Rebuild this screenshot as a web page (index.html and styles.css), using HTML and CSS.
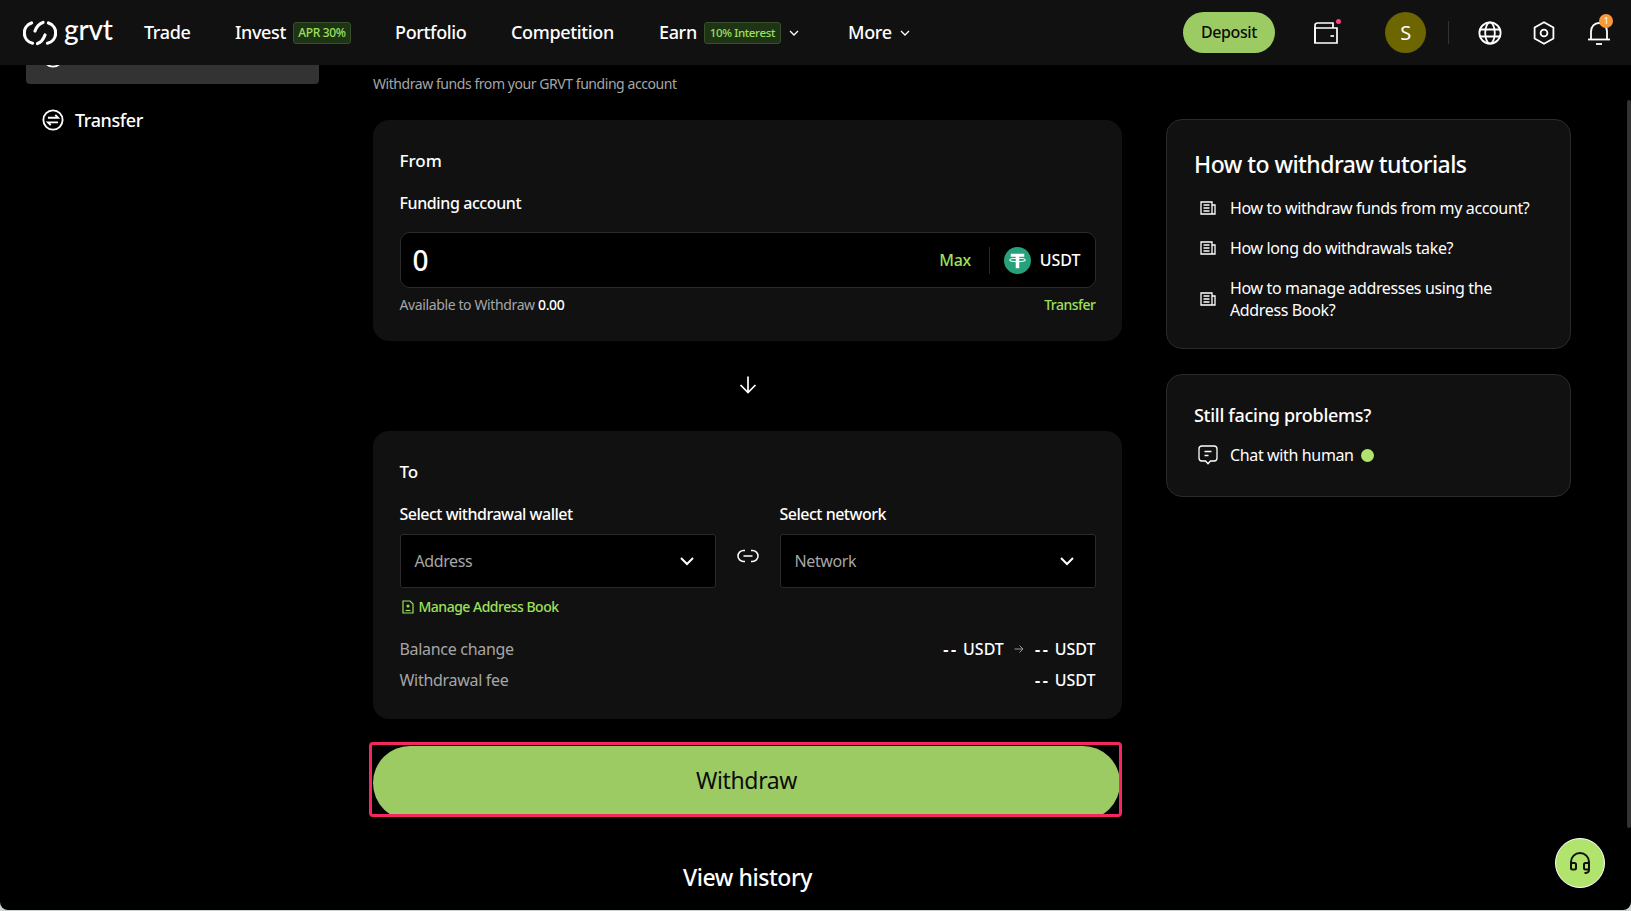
FILE: index.html
```html
<!DOCTYPE html>
<html lang="en">
<head>
<meta charset="utf-8">
<title>Withdraw</title>
<link rel="stylesheet" href="styles.css">
</head>
<body>
<div class="app">
  <header class="topbar">
    <a class="logo">
      <svg class="logo-mark" viewBox="0 0 34 26" fill="none" stroke="#fff" stroke-width="3.2" stroke-linecap="round">
        <path d="M8.5 3A10.5 10.5 0 0 0 9.5 23.2"/>
        <path d="M25.5 3A10.5 10.5 0 0 1 24.5 23.2"/>
        <path d="M20 2.5C16 3.5 13.5 7 12 11"/>
        <path d="M22 15C20.5 19 18 22.5 14.5 23.5"/>
      </svg>
      <span class="logo-text">grvt</span>
    </a>
    <nav class="nav">
      <a class="nav-item nav-trade">Trade</a>
      <a class="nav-item nav-invest">Invest<span class="tag tag-apr">APR 30%</span></a>
      <a class="nav-item nav-portfolio">Portfolio</a>
      <a class="nav-item nav-competition">Competition</a>
      <a class="nav-item nav-earn">Earn<span class="tag tag-interest">10% Interest</span>
        <svg class="chev" viewBox="0 0 10 6" fill="none" stroke="#fff" stroke-width="1.3"><path d="M1 1l4 4 4-4"/></svg></a>
      <a class="nav-item nav-more">More
        <svg class="chev" viewBox="0 0 10 6" fill="none" stroke="#fff" stroke-width="1.3"><path d="M1 1l4 4 4-4"/></svg></a>
    </nav>
    <div class="top-actions">
      <button class="deposit">Deposit</button>
      <span class="icon-wrap wallet">
        <svg viewBox="0 0 24 22" width="24" height="22" fill="none" stroke="#fff" stroke-width="1.7">
          <path d="M1 21V3.5C1 2 2 1 3.5 1H19V6"/><path d="M1 6H23V21H1Z"/><path d="M16.5 14H20"/>
        </svg>
        <i class="wallet-dot"></i>
      </span>
      <span class="avatar">S</span>
      <span class="sep"></span>
      <svg class="top-icon globe" viewBox="0 0 24 24" fill="none" stroke="#fff" stroke-width="1.8">
        <circle cx="12" cy="12" r="10.6"/><ellipse cx="12" cy="12" rx="4.8" ry="10.6"/><path d="M1.4 8.5H22.6M1.4 15.5H22.6"/>
      </svg>
      <svg class="top-icon hex" viewBox="0 0 24 24" fill="none" stroke="#fff" stroke-width="1.8">
        <path d="M12 1.2L21.4 6.5V17.5L12 22.8L2.6 17.5V6.5Z"/><circle cx="12" cy="12" r="3.4"/>
      </svg>
      <span class="icon-wrap bell">
        <svg viewBox="0 0 24 24" width="24" height="24" fill="none" stroke="#fff" stroke-width="1.8">
          <path d="M4 18V10.5C4 5.5 7.5 2 12 2S20 5.5 20 10.5V18"/><path d="M1 18.5H23"/><path d="M9 23H15"/>
        </svg>
        <i class="bell-badge">1</i>
      </span>
    </div>
  </header>

  <div class="content">
    <aside class="sidebar">
      <div class="side-active">
        <svg class="side-icon" viewBox="0 0 24 24" fill="none" stroke="#fff" stroke-width="2"><circle cx="12" cy="12" r="10.5"/></svg>
      </div>
      <div class="side-item">
        <svg class="side-icon" viewBox="0 0 24 24" fill="none" stroke="#fff" stroke-width="2"><circle cx="12" cy="12" r="10.5"/><path d="M6.5 9.5H17.5L14.5 6.5M17.5 14.5H6.5L9.5 17.5"/></svg>
        <span>Transfer</span>
      </div>
    </aside>

    <main class="main">
      <p class="subtitle">Withdraw funds from your GRVT funding account</p>

      <section class="card card-from">
        <h3 class="card-title">From</h3>
        <div class="field-label">Funding account</div>
        <div class="amount">
          <span class="amount-value">0</span>
          <span class="max">Max</span>
          <span class="amount-sep"></span>
          <svg class="usdt" viewBox="0 0 26 26">
            <circle cx="13" cy="13" r="13" fill="#26a17b"/>
            <path d="M6.5 6.5H19.5V9.5H14.7V20.5H11.3V9.5H6.5Z" fill="#fff"/>
            <ellipse cx="13" cy="12.5" rx="7.5" ry="1.6" fill="none" stroke="#fff" stroke-width="1"/>
          </svg>
          <span class="coin">USDT</span>
        </div>
        <div class="avail">
          <span class="avail-label">Available to Withdraw <b>0.00</b></span>
          <a class="green-link">Transfer</a>
        </div>
      </section>

      <div class="arrow-row">
        <svg viewBox="0 0 18 18" width="18" height="18" fill="none" stroke="#fff" stroke-width="1.7"><path d="M9 0.5V16.5M1.5 9L9 16.5L16.5 9"/></svg>
      </div>

      <section class="card card-to">
        <h3 class="card-title">To</h3>
        <div class="selects">
          <div class="select-col">
            <div class="field-label">Select withdrawal wallet</div>
            <div class="select">
              <span>Address</span>
              <svg viewBox="0 0 14 9" width="14" height="9" fill="none" stroke="#fff" stroke-width="2"><path d="M1 1l6 6 6-6"/></svg>
            </div>
          </div>
          <div class="link-icon">
            <svg viewBox="0 0 22 14" width="22" height="14" fill="none" stroke="#fff" stroke-width="1.5"><path d="M8 1.5H6.5a5.5 5.5 0 0 0 0 11H8M14 1.5h1.5a5.5 5.5 0 0 1 0 11H14M6.5 7H15.5"/></svg>
          </div>
          <div class="select-col">
            <div class="field-label">Select network</div>
            <div class="select">
              <span>Network</span>
              <svg viewBox="0 0 14 9" width="14" height="9" fill="none" stroke="#fff" stroke-width="2"><path d="M1 1l6 6 6-6"/></svg>
            </div>
          </div>
        </div>
        <a class="manage">
          <svg viewBox="0 0 12 14" width="12" height="14" fill="none" stroke="#9ee05a" stroke-width="1.2"><path d="M1 1H8L11 4V13H1Z"/><circle cx="6" cy="6" r="1" fill="#9ee05a"/><path d="M3.5 10.5H8.5"/></svg>
          Manage Address Book
        </a>
        <div class="row row-balance">
          <span class="row-label">Balance change</span>
          <span class="row-value">
            <span class="amt"><span class="dash">--</span> USDT</span>
            <svg viewBox="0 0 10 10" width="10" height="10" fill="none" stroke="#999" stroke-width="1"><path d="M0.5 5H9M5.5 1.5L9 5L5.5 8.5"/></svg>
            <span class="amt"><span class="dash">--</span> USDT</span>
          </span>
        </div>
        <div class="row">
          <span class="row-label">Withdrawal fee</span>
          <span class="row-value"><span class="amt"><span class="dash">--</span> USDT</span></span>
        </div>
      </section>

      <div class="withdraw-frame"><button class="withdraw">Withdraw</button></div>
      <div class="history">View history</div>
    </main>

    <aside class="help">
      <section class="help-card tutorials">
        <h2 class="help-title">How to withdraw tutorials</h2>
        <a class="help-link">
          <svg class="doc" viewBox="0 0 16 14" fill="none" stroke="#fff" stroke-width="1.3"><path d="M1 1H12V13H1ZM3.5 4H9.5M3.5 7H9.5M3.5 10H9.5M12 4H15V13H12"/></svg>
          <span>How to withdraw funds from my account?</span>
        </a>
        <a class="help-link">
          <svg class="doc" viewBox="0 0 16 14" fill="none" stroke="#fff" stroke-width="1.3"><path d="M1 1H12V13H1ZM3.5 4H9.5M3.5 7H9.5M3.5 10H9.5M12 4H15V13H12"/></svg>
          <span>How long do withdrawals take?</span>
        </a>
        <a class="help-link">
          <svg class="doc" viewBox="0 0 16 14" fill="none" stroke="#fff" stroke-width="1.3"><path d="M1 1H12V13H1ZM3.5 4H9.5M3.5 7H9.5M3.5 10H9.5M12 4H15V13H12"/></svg>
          <span>How to manage addresses using the<br>Address Book?</span>
        </a>
      </section>
      <section class="help-card problems">
        <h3 class="problems-title">Still facing problems?</h3>
        <a class="help-link">
          <svg class="chat" viewBox="0 0 20 20" fill="none" stroke="#fff" stroke-width="1.3"><path d="M4 1H16C17.7 1 19 2.3 19 4V13C19 14.7 17.7 16 16 16H12.5L10 18.8L7.5 16H4C2.3 16 1 14.7 1 13V4C1 2.3 2.3 1 4 1ZM6.5 6.5H13.5M6.5 10.5H10.5"/></svg>
          <span>Chat with human</span>
          <i class="online"></i>
        </a>
      </section>
    </aside>
  </div>

  <i class="scrollbar"></i>
  <button class="support" aria-label="Support">
    <svg viewBox="0 0 22 22" width="22" height="22" fill="none" stroke="#111" stroke-width="2"><path d="M2 13V10A9 9 0 0 1 20 10V13"/><rect x="2" y="11" width="5" height="6.5" rx="1.5"/><rect x="15" y="11" width="5" height="6.5" rx="1.5"/><path d="M20 17V18C20 20 18 21 15.5 21"/></svg>
  </button>
</div>
</body>
</html>
```

FILE: styles.css
```css
* { box-sizing: border-box; }
html, body { margin: 0; height: 100%; }
body {
  background: #cdd4d4;
  font-family: "Noto Sans", "Open Sans", sans-serif;
  color: #fff;
  letter-spacing: -0.4px;
  overflow: hidden;
}
h2, h3, p { margin: 0; }
button { font-family: inherit; border: 0; letter-spacing: inherit; }

.app {
  position: relative;
  height: 910px;
  background: #000;
  border-radius: 0 0 8px 8px;
  overflow: hidden;
  display: flex;
  flex-direction: column;
}

/* top bar */
.topbar {
  flex: none;
  height: 65px;
  background: #111;
  display: flex;
  align-items: center;
  padding-left: 23px;
  position: relative;
  z-index: 2;
}
.logo { display: flex; align-items: center; width: 121px; }
.logo-mark { width: 34px; height: 26px; }
.logo-text {
  font-family: "Lato", sans-serif;
  font-size: 28px;
  font-weight: 500;
  line-height: 26px;
  margin: -7px 0 0 7px;
  letter-spacing: -0.2px;
}
.nav { display: flex; align-items: center; font-size: 18px; font-weight: 500; letter-spacing: -0.35px; margin-bottom: 2px; }
.nav-item { display: flex; align-items: center; }
.nav-trade { width: 91px; }
.nav-invest { width: 160px; }
.nav-portfolio { width: 116px; }
.nav-competition { width: 148px; }
.nav-earn { width: 189px; }
.tag {
  display: inline-flex;
  align-items: center;
  justify-content: center;
  height: 22px;
  margin: 2px 0 0 7px;
  border: 1px solid #35502a;
  border-radius: 3px;
  background: #1f3315;
  color: #9ee05a;
  font-size: 12px;
  font-weight: 500;
}
.tag-apr { width: 58px; }
.tag-interest { width: 77px; font-size: 11.5px; }
.chev { width: 10px; height: 6px; margin: 2px 0 0 8px; }
.top-actions { margin-left: auto; display: flex; align-items: center; height: 65px; }
.deposit {
  width: 92px;
  height: 41px;
  border-radius: 21px;
  background: #9ccb63;
  color: #0c0c0c;
  font-size: 16px;
  font-weight: 500;
  padding: 0 0 1px;
}
.icon-wrap { position: relative; display: block; }
.wallet { width: 24px; height: 22px; margin-left: 39px; }
.wallet-dot {
  position: absolute;
  top: -3px;
  right: -3px;
  width: 5px;
  height: 5px;
  border-radius: 50%;
  background: #f5437a;
}
.avatar {
  width: 41px;
  height: 41px;
  margin-left: 47px;
  border-radius: 50%;
  background: #6c6500;
  display: flex;
  align-items: center;
  justify-content: center;
  font-size: 20px;
}
.sep { width: 1px; height: 23px; margin-left: 22px; background: #333; }
.top-icon { width: 24px; height: 24px; display: block; }
.globe { margin-left: 29px; }
.hex { margin-left: 30px; }
.bell { width: 24px; height: 24px; margin: 0 20px 0 31px; }
.bell-badge {
  position: absolute;
  top: -7px;
  right: -2px;
  width: 14px;
  height: 14px;
  border-radius: 50%;
  background: #f79a3b;
  font-size: 9px;
  font-style: normal;
  line-height: 14px;
  text-align: center;
}

/* body */
.content { flex: 1; min-height: 0; display: flex; overflow: hidden; }
.sidebar { width: 373px; flex: none; padding-left: 26px; }
.side-active {
  width: 293px;
  height: 50px;
  margin-top: -31px;
  background: #333;
  border-radius: 4px;
  padding: 12px 0 0 16px;
}
.side-item {
  display: flex;
  align-items: center;
  gap: 11px;
  margin-top: 22px;
  padding-left: 16px;
  font-size: 18px;
  font-weight: 500;
  height: 28px;
}
.side-icon { width: 22px; height: 22px; flex: none; display: block; }

.main { width: 749px; flex: none; }
.subtitle {
  height: 55px;
  padding-top: 9px;
  font-size: 14px;
  line-height: 20px;
  color: #a6a6a6;
  letter-spacing: -0.44px;
}
.card { background: #111; border-radius: 16px; padding: 0 26.5px 0 26.5px; }
.card-from { height: 221px; padding-top: 29px; }
.card-to { height: 288px; padding-top: 29px; }
.card-title { font-size: 17px; font-weight: 500; line-height: 24px; letter-spacing: 0; }
.field-label { font-size: 16px; font-weight: 500; line-height: 24px; }
.card-to .field-label { letter-spacing: -0.5px; }
.card-from .field-label { margin-top: 18px; }
.amount {
  height: 56px;
  margin-top: 17px;
  display: flex;
  align-items: center;
  background: #000;
  border: 1px solid #2a2a2a;
  border-radius: 10px;
  padding: 0 14px 0 12px;
}
.amount-value { font-size: 28px; font-weight: 500; flex: 1; }
.max { color: #9ee05a; font-size: 16px; font-weight: 500; }
.amount-sep { width: 1px; height: 27px; background: #2a2a2a; margin: 0 14px 0 18px; }
.usdt { width: 27px; height: 27px; margin-right: 9px; }
.coin { font-size: 16px; font-weight: 500; letter-spacing: 0; }
.avail {
  display: flex;
  justify-content: space-between;
  margin-top: 7px;
  font-size: 14px;
  line-height: 20px;
  letter-spacing: -0.38px;
}
.avail-label { color: #a6a6a6; }
.avail-label b { color: #fff; font-weight: 500; }
.green-link { color: #9ee05a; font-weight: 500; letter-spacing: -0.5px; }
.arrow-row { height: 90px; padding-bottom: 2px; display: flex; align-items: center; justify-content: center; }

.selects { display: flex; margin-top: 18px; }
.select-col { width: 316px; flex: none; }
.link-icon { width: 64px; padding-top: 47px; display: flex; justify-content: center; }
.select {
  height: 54px;
  margin-top: 8px;
  display: flex;
  align-items: center;
  justify-content: space-between;
  padding: 0 21px 0 14px;
  background: #000;
  border: 1px solid #2a2a2a;
  border-radius: 3px;
  color: #a6a6a6;
  font-size: 16px;
  font-weight: 400;
}
.manage {
  display: flex;
  align-items: center;
  gap: 5px;
  margin: 9px 0 0 2px;
  color: #9ee05a;
  font-size: 14px;
  font-weight: 500;
  line-height: 20px;
  letter-spacing: -0.5px;
}
.row { display: flex; justify-content: space-between; line-height: 24px; font-size: 16px; margin-top: 7px; letter-spacing: -0.3px; }
.row-balance { margin-top: 20px; }
.row-label { color: #a6a6a6; }
.row-value { font-weight: 500; display: flex; align-items: center; letter-spacing: 0; }
.row-value svg { margin: 0 10.5px; }
.dash { font-weight: 700; letter-spacing: 2.7px; }

.withdraw-frame {
  height: 75px;
  margin: 23px 0 0 -4px;
  width: 753px;
  padding: 1px 0 0 1px;
  border: 3px solid #f4285f;
  border-radius: 4px;
  overflow: hidden;
}
.withdraw {
  display: block;
  width: 747px;
  height: 74px;
  border-radius: 37px;
  background: #9ccb63;
  color: #0c0c0c;
  font-size: 23px;
  font-weight: 400;
  line-height: 68px;
  padding: 0 0 6px;
  letter-spacing: -0.35px;
}
.history { text-align: center; margin-top: 43px; font-size: 23px; font-weight: 500; line-height: 34px; letter-spacing: -0.43px; }

.help { width: 405px; flex: none; margin-left: 44px; padding-top: 54px; }
.help-card { background: #111; border: 1px solid #2a2a2a; border-radius: 16px; padding: 0 27px; }
.tutorials { height: 230px; padding-top: 28px; }
.problems { height: 123px; margin-top: 25px; padding-top: 27px; }
.help-title { font-size: 23px; font-weight: 500; line-height: 32px; margin-bottom: 17px; letter-spacing: -0.54px; }
.problems-title { font-size: 18px; font-weight: 500; line-height: 26px; margin-bottom: 16px; letter-spacing: -0.28px; }
.help-link { display: flex; align-items: center; font-size: 16px; line-height: 22px; margin-bottom: 18px; letter-spacing: -0.36px; }
.doc { width: 16px; height: 14px; margin: 0 14px 0 6px; flex: none; }
.chat { width: 20px; height: 20px; margin: 0 12px 0 4px; flex: none; }
.online { width: 13px; height: 13px; margin-left: 7px; border-radius: 50%; background: #b1e46c; }

.scrollbar {
  position: absolute;
  top: 100px;
  right: 0;
  width: 4px;
  height: 728px;
  border-radius: 2px;
  background: #333;
}
.support {
  position: absolute;
  left: 1555px;
  top: 838px;
  width: 50px;
  height: 50px;
  padding: 0;
  border: 1px solid #fff;
  border-radius: 50%;
  background: #b1e46c;
  display: flex;
  align-items: center;
  justify-content: center;
}
```
